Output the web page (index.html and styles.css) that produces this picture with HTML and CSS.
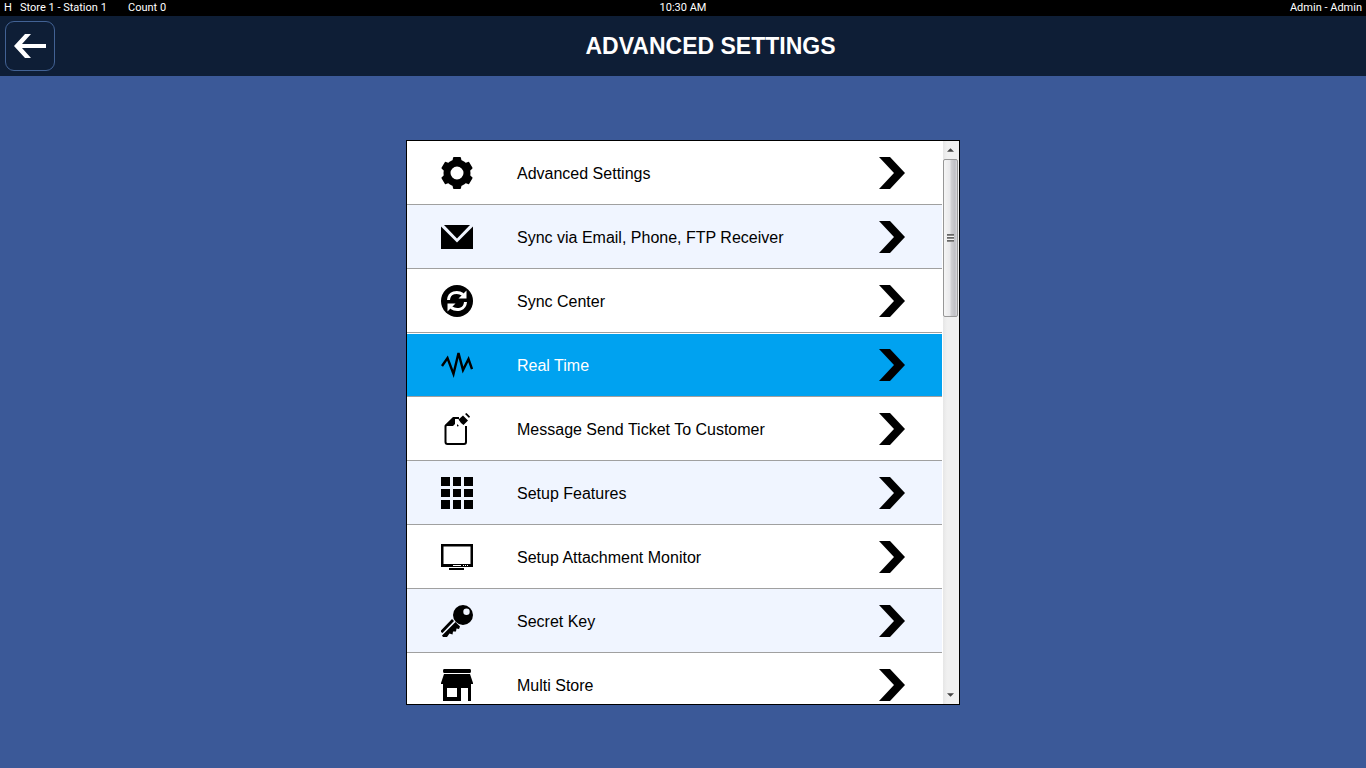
FILE: index.html
```html
<!DOCTYPE html>
<html lang="en">

<head>
    <meta charset="UTF-8">
    <meta name="viewport" content="width=device-width, initial-scale=1.0">
    <title>Advanced Settings</title>
    <link rel="stylesheet" href="styles.css">
</head>

<body>
    <svg class="defs" width="0" height="0" aria-hidden="true">
        <symbol id="chevron" viewBox="0 0 26 32">
            <path d="M0,0H11L26,16L11,32H0L15,16Z" />
        </symbol>
    </svg>

    <div class="status-bar">
        <div class="status-left">
            <span class="status-flag">H</span>
            <span class="status-store">Store 1 - Station 1</span>
            <span>Count 0</span>
        </div>
        <div class="status-time">10:30 AM</div>
        <div class="status-user">Admin - Admin</div>
    </div>

    <header class="header">
        <button type="button" class="back-button" aria-label="Back">
            <svg width="32" height="24" viewBox="0 0 32 24">
                <path d="M0,12L11,0H17L8,10H32V14H8L17,24H11Z" fill="#fff" />
            </svg>
        </button>
        <h1 class="title">ADVANCED SETTINGS</h1>
    </header>

    <main class="content">
        <div class="panel">
            <ul class="settings-list">
                <li>
                    <a href="#" class="row">
                        <svg class="icon" viewBox="0 0 32 32">
                            <circle cx="16" cy="16" r="10" fill="none" stroke="#000" stroke-width="7" />
                            <path d="M11,6L12,1Q12,0 13,0H19Q20,0 20,1L21,6ZM11,26L12,31Q12,32 13,32H19Q20,32 20,31L21,26Z" />
                            <path transform="rotate(60 16 16)" d="M11,6L12,1Q12,0 13,0H19Q20,0 20,1L21,6ZM11,26L12,31Q12,32 13,32H19Q20,32 20,31L21,26Z" />
                            <path transform="rotate(120 16 16)" d="M11,6L12,1Q12,0 13,0H19Q20,0 20,1L21,6ZM11,26L12,31Q12,32 13,32H19Q20,32 20,31L21,26Z" />
                        </svg>
                        <span class="label">Advanced Settings</span>
                        <svg class="chevron"><use href="#chevron" /></svg>
                    </a>
                </li>
                <li>
                    <a href="#" class="row">
                        <svg class="icon" viewBox="0 0 32 32">
                            <path d="M3,4H29L16,17.500Z" />
                            <path d="M0,5.500L16,21.500L32,5.500V28H0Z" />
                        </svg>
                        <span class="label">Sync via Email, Phone, FTP Receiver</span>
                        <svg class="chevron"><use href="#chevron" /></svg>
                    </a>
                </li>
                <li>
                    <a href="#" class="row">
                        <svg class="icon" viewBox="0 0 32 32">
                            <circle cx="16" cy="16" r="16" />
                            <g fill="none" stroke="#fff" stroke-width="3">
                                <path d="M7.500,15C8,7.500 16,5.500 22,9.500" />
                                <path d="M24.500,17C24,24.500 16,26.500 10,22.500" />
                            </g>
                            <path fill="#fff" d="M25.500,5.500V13.500H17.500ZM6.500,26.500V18.500H14.500Z" />
                        </svg>
                        <span class="label">Sync Center</span>
                        <svg class="chevron"><use href="#chevron" /></svg>
                    </a>
                </li>
                <li>
                    <a href="#" class="row selected" aria-current="true">
                        <svg class="icon" viewBox="0 0 32 32">
                            <path fill="none" stroke="#000" stroke-width="2.400" d="M1,17L6.500,9L12.500,25L17.500,4L22,21L27.500,10L31,20" />
                        </svg>
                        <span class="label">Real Time</span>
                        <svg class="chevron"><use href="#chevron" /></svg>
                    </a>
                </li>
                <li>
                    <a href="#" class="row">
                        <svg class="icon" viewBox="0 0 32 32">
                            <path fill="none" stroke="#000" stroke-width="2" d="M18,5H13L4.500,13V29Q4.500,31 6.500,31H23Q25,31 25,29V13" />
                            <path d="M12,4H14V11L12,13H4V12ZM17.500,6.500L22,2.500L27,7.500L22.500,12L20,10ZM16,11L18,13L16,13.500ZM24,1L25.500,0L29,3.500L28,5Z" />
                        </svg>
                        <span class="label">Message Send Ticket To Customer</span>
                        <svg class="chevron"><use href="#chevron" /></svg>
                    </a>
                </li>
                <li>
                    <a href="#" class="row">
                        <svg class="icon" viewBox="0 0 32 32">
                            <path d="M0,0h9v9h-9zM12,0h8v9h-8zM23,0h9v9h-9zM0,12h9v8h-9zM12,12h8v8h-8zM23,12h9v8h-9zM0,23h9v9h-9zM12,23h8v9h-8zM23,23h9v9h-9z" />
                        </svg>
                        <span class="label">Setup Features</span>
                        <svg class="chevron"><use href="#chevron" /></svg>
                    </a>
                </li>
                <li>
                    <a href="#" class="row">
                        <svg class="icon" viewBox="0 0 32 32">
                            <path fill-rule="evenodd" d="M0,3H32V26H0ZM2.500,5.500V23H29.500V5.500Z" />
                            <path d="M8,27H23V29H8Z" />
                            <path fill="#fff" d="M12,24H20V25H12ZM22,24h1v1h-1zM24,24h1v1h-1zM26,24h1v1h-1z" />
                        </svg>
                        <span class="label">Setup Attachment Monitor</span>
                        <svg class="chevron"><use href="#chevron" /></svg>
                    </a>
                </li>
                <li>
                    <a href="#" class="row">
                        <svg class="icon" viewBox="0 0 32 32">
                            <path fill-rule="evenodd" d="M22,0A10,10 0 1 1 22,20A10,10 0 1 1 22,0ZM25.500,3.500A3.200,3.200 0 1 0 25.500,9.900A3.200,3.200 0 1 0 25.500,3.500Z" />
                            <path d="M11,14L13,16L1.500,28L0,27V25.500ZM14.500,17L19,21.500L18,24L15.500,23.500L15,26.500L12,26.500L11.500,29.500L8.500,28.500L6,32L2,32L1,30.500Z" />
                        </svg>
                        <span class="label">Secret Key</span>
                        <svg class="chevron"><use href="#chevron" /></svg>
                    </a>
                </li>
                <li>
                    <a href="#" class="row">
                        <svg class="icon" viewBox="0 0 32 32">
                            <path d="M3,0H29Q30,0 30,2T29,4H3Q2,4 2,2T3,0ZM3,5H29L32,14V15H0V14Z" />
                            <path fill-rule="evenodd" d="M2,15H30V32H27V19H20V32H2ZM6,19V28H16V19Z" />
                        </svg>
                        <span class="label">Multi Store</span>
                        <svg class="chevron"><use href="#chevron" /></svg>
                    </a>
                </li>
            </ul>
            <div class="scrollbar" aria-hidden="true">
                <svg class="arrow" viewBox="0 0 8 4"><path d="M0,4L4,0L8,4Z" /></svg>
                <div class="thumb">
                    <span class="grip"></span>
                </div>
                <svg class="arrow arrow-down" viewBox="0 0 8 4"><path d="M0,0H8L4,4Z" /></svg>
            </div>
        </div>
    </main>
</body>

</html>
```
FILE: styles.css
```css
* {
    box-sizing: border-box;
}

body {
    margin: 0;
    height: 100vh;
    display: flex;
    flex-direction: column;
    background: #3b5998;
    font-family: "Liberation Sans", Arial, sans-serif;
}

.defs {
    position: absolute;
}

/* Status bar */
.status-bar {
    display: grid;
    grid-template-columns: 1fr auto 1fr;
    height: 16px;
    padding: 0 4px;
    background: #000;
    color: #fff;
    font-family: "Roboto", sans-serif;
    font-size: 11px;
    line-height: 15px;
}

.status-left {
    display: flex;
}

.status-flag {
    width: 16px;
}

.status-store {
    width: 108px;
}

.status-user {
    text-align: right;
}

/* Header */
.header {
    display: flex;
    align-items: center;
    height: 60px;
    padding-left: 5px;
    background: #0e1e36;
}

.back-button {
    display: flex;
    align-items: center;
    justify-content: center;
    width: 50px;
    height: 50px;
    padding: 0;
    border: 1px solid #426294;
    border-radius: 9px;
    background: transparent;
}

.title {
    flex: 1;
    margin: 0;
    color: #fff;
    font-size: 23px;
    font-weight: bold;
    text-align: center;
}

/* Settings panel */
.content {
    flex: 1;
    min-height: 0;
    display: flex;
    justify-content: center;
    padding: 64px 0 63px;
}

.panel {
    display: flex;
    width: 100%;
    max-width: 554px;
    border: 1px solid #000;
    background: #fff;
}

.settings-list {
    flex: 1;
    margin: 0;
    padding: 0;
    overflow: hidden;
    list-style: none;
}

.row {
    display: flex;
    align-items: center;
    height: 64px;
    padding: 0 37px 0 34px;
    border-bottom: 1px solid #a0a0a0;
    color: #000;
    font-size: 16px;
    text-decoration: none;
}

li:nth-child(even) .row {
    background: #f0f5ff;
}

li:nth-child(even) .row.selected {
    border-top: 1px solid #fff;
    background: #00a2f0;
    color: #fff;
}

.icon {
    flex: none;
    width: 32px;
    height: 32px;
    margin-right: 44px;
}

.label {
    flex: 1;
    padding-top: 2px;
}

.chevron {
    width: 26px;
    height: 32px;
}

/* Scrollbar */
.scrollbar {
    display: flex;
    flex-direction: column;
    align-items: center;
    width: 17px;
    padding-right: 1px;
    border-left: 1px solid #fff;
    background: linear-gradient(to right, #e6e6e6, #f0f0f0 4px, #f0f0f0);
}

.thumb {
    display: flex;
    align-items: center;
    justify-content: center;
    width: 15px;
    height: 158px;
    border: 1px solid #979797;
    border-radius: 2px;
    background: linear-gradient(to right, #f5f5f5, #e9e9eb 45%, #d0d0d3 55%, #bfbfc4 85%, #dcdcdf);
}

.grip {
    width: 7px;
    height: 8px;
    background: repeating-linear-gradient(to bottom, #555 0, #999 2px, #f4f4f4 2px, #f4f4f4 3px);
}

.arrow {
    width: 7px;
    height: 4px;
    margin: 7px 0;
    fill: #444;
}

.arrow-down {
    margin: auto 0 7px;
}
```
